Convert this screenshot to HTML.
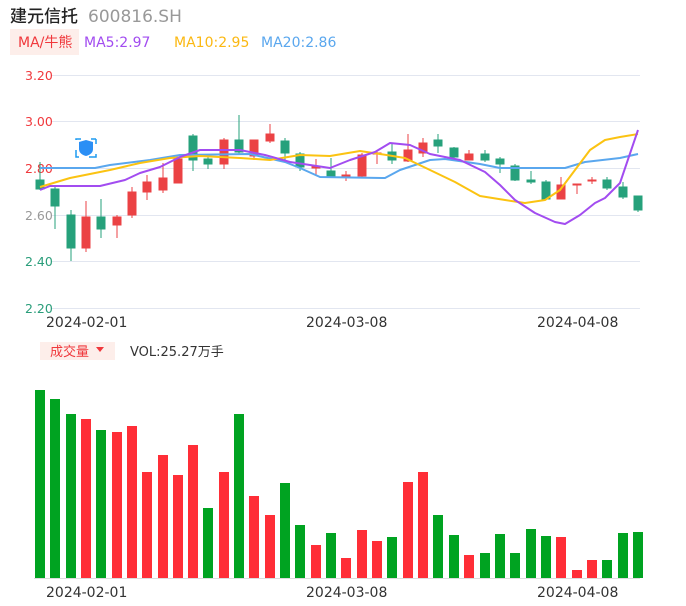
<!DOCTYPE html>
<html><head><meta charset="utf-8"><style>
body{margin:0;background:#fff;width:686px;height:606px;overflow:hidden;font-family:"DejaVu Sans","Liberation Sans","Noto Sans CJK SC",sans-serif}
svg{position:absolute;left:0;top:0}
</style></head><body>
<svg width="686" height="606" xmlns="http://www.w3.org/2000/svg" font-family="DejaVu Sans, Liberation Sans, Noto Sans CJK SC, sans-serif">
<text x="10" y="22" font-size="17" fill="#222" font-family="Noto Sans CJK SC, sans-serif" font-weight="500">建元信托</text>
<text x="88" y="22" font-size="17" fill="#999">600816.SH</text>
<rect x="10" y="29" width="69" height="26" fill="#fdeeea"/>
<text x="18" y="47" font-size="14" fill="#f0383c" font-family="DejaVu Sans, Noto Sans CJK SC, sans-serif">MA/牛熊</text>
<text x="84" y="47" font-size="14" fill="#a24cf0">MA5:2.97</text>
<text x="174" y="47" font-size="14" fill="#fbb812">MA10:2.95</text>
<text x="261" y="47" font-size="14" fill="#5aa7ee">MA20:2.86</text>
<g stroke="#e2e6f0" stroke-width="1">
<line x1="52" y1="75.5" x2="640" y2="75.5"/><line x1="52" y1="121.5" x2="640" y2="121.5"/><line x1="52" y1="168.5" x2="640" y2="168.5"/><line x1="52" y1="215.5" x2="640" y2="215.5"/><line x1="52" y1="261.5" x2="640" y2="261.5"/><line x1="52" y1="308.5" x2="640" y2="308.5"/>
</g>
<g font-size="12.5">
<text x="25" y="80" fill="#f0383c">3.20</text><text x="25" y="126" fill="#f0383c">3.00</text><text x="25" y="173" fill="#f0383c">2.80</text><text x="25" y="220" fill="#999">2.60</text><text x="25" y="266" fill="#2a9d7a">2.40</text><text x="25" y="313" fill="#2a9d7a">2.20</text>
</g>
<g font-size="14" fill="#333"><text x="46" y="327">2024-02-01</text><text x="306" y="327">2024-03-08</text><text x="537" y="327">2024-04-08</text></g>
<g>
<rect x="76" y="139" width="20" height="18" fill="none" stroke="#1e9bf0" stroke-width="1.5" stroke-dasharray="5 10 5 0"/>
<path d="M79 142 L86 140 L93 142 L93 149 Q93 154 86 156 Q79 154 79 149Z" fill="#2b8ff5"/>
</g>
<g id="c">
<!-- candles: x, wick, body -->
<g stroke-width="1">
<g fill="#26a17b" stroke="#26a17b">
<line x1="40" y1="162" x2="40" y2="190"/><rect x="36" y="180" width="8" height="9"/>
<line x1="55" y1="185" x2="55" y2="229"/><rect x="51" y="189" width="8" height="17"/>
<line x1="71" y1="210" x2="71" y2="261"/><rect x="67" y="215" width="8" height="33"/>
<line x1="101" y1="199" x2="101" y2="238"/><rect x="97" y="217" width="8" height="12"/>
<line x1="193" y1="134" x2="193" y2="171"/><rect x="189" y="136" width="8" height="24"/>
<line x1="208" y1="156" x2="208" y2="169"/><rect x="204" y="159" width="8" height="5"/>
<line x1="239" y1="115" x2="239" y2="155"/><rect x="235" y="140" width="8" height="12"/>
<line x1="285" y1="138" x2="285" y2="162"/><rect x="281" y="141" width="8" height="12"/>
<line x1="300" y1="152" x2="300" y2="171"/><rect x="296" y="154" width="8" height="13"/>
<line x1="331" y1="158" x2="331" y2="177"/><rect x="327" y="171" width="8" height="5"/>
<line x1="392" y1="144" x2="392" y2="164"/><rect x="388" y="152" width="8" height="8"/>
<line x1="438" y1="134" x2="438" y2="153"/><rect x="434" y="140" width="8" height="6"/>
<line x1="454" y1="147" x2="454" y2="158"/><rect x="450" y="148" width="8" height="9"/>
<line x1="485" y1="150" x2="485" y2="162"/><rect x="481" y="154" width="8" height="6"/>
<line x1="500" y1="157" x2="500" y2="173"/><rect x="496" y="159" width="8" height="5"/>
<line x1="515" y1="164" x2="515" y2="181"/><rect x="511" y="166" width="8" height="14"/>
<line x1="531" y1="171" x2="531" y2="184"/><rect x="527" y="180" width="8" height="2"/>
<line x1="546" y1="180" x2="546" y2="200"/><rect x="542" y="182" width="8" height="17"/>
<line x1="607" y1="177" x2="607" y2="190"/><rect x="603" y="180" width="8" height="8"/>
<line x1="623" y1="182" x2="623" y2="199"/><rect x="619" y="187" width="8" height="10"/>
<line x1="638" y1="196" x2="638" y2="212"/><rect x="634" y="196" width="8" height="14"/>
</g>
<g fill="#eb4244" stroke="#eb4244">
<line x1="86" y1="201" x2="86" y2="252"/><rect x="82" y="217" width="8" height="31"/>
<line x1="117" y1="215" x2="117" y2="238"/><rect x="113" y="217" width="8" height="8"/>
<line x1="132" y1="187" x2="132" y2="218"/><rect x="128" y="192" width="8" height="23"/>
<line x1="147" y1="175" x2="147" y2="200"/><rect x="143" y="182" width="8" height="10"/>
<line x1="163" y1="163" x2="163" y2="193"/><rect x="159" y="178" width="8" height="12"/>
<line x1="178" y1="158" x2="178" y2="183"/><rect x="174" y="159" width="8" height="24"/>
<line x1="224" y1="138" x2="224" y2="169"/><rect x="220" y="140" width="8" height="24"/>
<line x1="254" y1="140" x2="254" y2="160"/><rect x="250" y="140" width="8" height="16"/>
<line x1="270" y1="124" x2="270" y2="143"/><rect x="266" y="134" width="8" height="7"/>
<line x1="316" y1="159" x2="316" y2="175"/><rect x="312" y="166" width="8" height="2"/>
<line x1="346" y1="171" x2="346" y2="181"/><rect x="342" y="175" width="8" height="1"/>
<line x1="362" y1="153" x2="362" y2="177"/><rect x="358" y="155" width="8" height="21"/>
<line x1="377" y1="150" x2="377" y2="164"/><rect x="373" y="153" width="8" height="1"/>
<line x1="408" y1="134" x2="408" y2="162"/><rect x="404" y="150" width="8" height="11"/>
<line x1="423" y1="138" x2="423" y2="157"/><rect x="419" y="143" width="8" height="10"/>
<line x1="469" y1="150" x2="469" y2="160"/><rect x="465" y="154" width="8" height="6"/>
<line x1="561" y1="177" x2="561" y2="199"/><rect x="557" y="185" width="8" height="14"/>
<line x1="577" y1="185" x2="577" y2="194"/><rect x="573" y="184" width="8" height="1"/>
<line x1="592" y1="177" x2="592" y2="184"/><rect x="588" y="180" width="8" height="1"/>
</g>
</g>
<g fill="none" stroke-width="2" stroke-linejoin="round">
<path stroke="#5aa7ee" d="M40 168 L95 168 L110 165 L150 160 L180 155 L250 154 L285 162 L300 168 L320 177 L385 178 L400 170 L430 160 L445 159 L480 164 L500 168 L565 168 L585 162 L620 158 L638 154"/>
<path stroke="#fbc312" d="M40 187 L70 178 L110 170 L140 163 L170 158 L200 156 L240 158 L270 160 L300 155 L330 156 L360 151 L380 154 L405 158 L430 170 L455 182 L480 196 L505 200 L525 203 L545 200 L560 190 L575 170 L590 150 L605 140 L620 137 L638 134"/>
<path stroke="#a24cf0" d="M40 190 L50 186 L100 186 L125 180 L140 173 L160 167 L180 157 L200 150 L240 150 L265 155 L290 162 L310 165 L330 168 L350 160 L375 152 L390 143 L410 145 L430 154 L460 160 L485 172 L500 185 L515 200 L535 213 L555 222 L565 224 L580 215 L595 203 L605 198 L620 183 L638 130"/>
</g>
</g>
<rect x="40" y="342" width="75" height="18" fill="#fdeeea"/>
<text x="50" y="356" font-size="13" fill="#f0383c" font-family="Noto Sans CJK SC, sans-serif">成交量</text>
<path d="M96 347 L104 347 L100 352Z" fill="#f0383c"/>
<text x="130" y="356" font-size="13" fill="#333" font-family="DejaVu Sans, Noto Sans CJK SC, sans-serif">VOL:25.27万手</text>
<g fill="#00a321">
<rect x="35" y="390" width="10" height="188"/><rect x="50" y="399" width="10" height="179"/><rect x="66" y="414" width="10" height="164"/><rect x="96" y="430" width="10" height="148"/><rect x="203" y="508" width="10" height="70"/><rect x="234" y="414" width="10" height="164"/><rect x="280" y="483" width="10" height="95"/><rect x="295" y="525" width="10" height="53"/><rect x="326" y="533" width="10" height="45"/><rect x="387" y="537" width="10" height="41"/><rect x="433" y="515" width="10" height="63"/><rect x="449" y="535" width="10" height="43"/><rect x="480" y="553" width="10" height="25"/><rect x="495" y="534" width="10" height="44"/><rect x="510" y="553" width="10" height="25"/><rect x="526" y="529" width="10" height="49"/><rect x="541" y="536" width="10" height="42"/><rect x="602" y="560" width="10" height="18"/><rect x="618" y="533" width="10" height="45"/><rect x="633" y="532" width="10" height="46"/>
</g>
<g fill="#ff2e37">
<rect x="81" y="419" width="10" height="159"/><rect x="112" y="432" width="10" height="146"/><rect x="127" y="426" width="10" height="152"/><rect x="142" y="472" width="10" height="106"/><rect x="158" y="455" width="10" height="123"/><rect x="173" y="475" width="10" height="103"/><rect x="188" y="445" width="10" height="133"/><rect x="219" y="472" width="10" height="106"/><rect x="249" y="496" width="10" height="82"/><rect x="265" y="515" width="10" height="63"/><rect x="311" y="545" width="10" height="33"/><rect x="341" y="558" width="10" height="20"/><rect x="357" y="530" width="10" height="48"/><rect x="372" y="541" width="10" height="37"/><rect x="403" y="482" width="10" height="96"/><rect x="418" y="472" width="10" height="106"/><rect x="464" y="555" width="10" height="23"/><rect x="556" y="537" width="10" height="41"/><rect x="572" y="570" width="10" height="8"/><rect x="587" y="560" width="10" height="18"/>
</g>
<line x1="34" y1="578.5" x2="640" y2="578.5" stroke="#ddd"/>
<g font-size="14" fill="#333"><text x="46" y="597">2024-02-01</text><text x="306" y="597">2024-03-08</text><text x="537" y="597">2024-04-08</text></g>
</svg>
</body></html>
